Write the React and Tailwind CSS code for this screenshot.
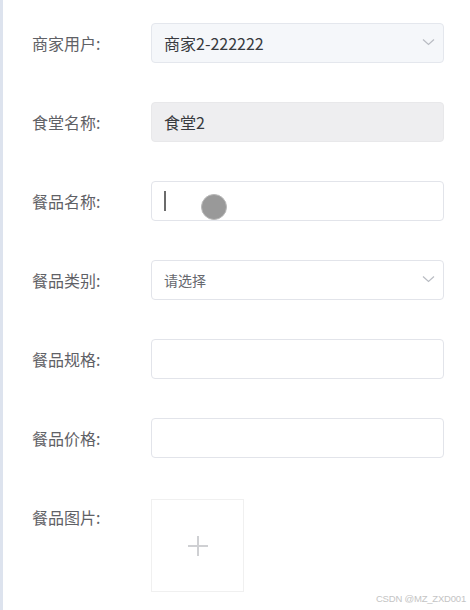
const fontStack = { fontFamily: '"Noto Sans CJK SC", "Noto Sans", sans-serif' }

function Chevron() {
  return (
    <svg width="13" height="8" viewBox="0 0 13 8" className="mb-[2px]">
      <path d="M1 1.5l5.5 5 5.5-5" fill="none" stroke="#b9bcc3" strokeWidth="1.2" />
    </svg>
  )
}

function Label({ children }) {
  return (
    <div className="w-[119px] shrink-0 h-10 leading-10 text-[16px] text-[#5f6166]">
      {children}
    </div>
  )
}

function Field({ label, children }) {
  return (
    <div className="flex items-start">
      <Label>{label}</Label>
      {children}
    </div>
  )
}

export default function App() {
  return (
    <div
      className="relative w-[470px] h-[610px] bg-white border-l-[3px] border-[#dde3ee] overflow-hidden"
      style={fontStack}
    >
      <div className="pl-[29px] pt-[23px] flex flex-col gap-[39px]">
        {/* 商家用户 (disabled select) */}
        <Field label="商家用户:">
          <div className="w-[293px] h-10 rounded bg-[#f5f7fa] border border-[#e4e7ed] flex items-center justify-between pl-3 pr-[8px]">
            <span className="text-[16px] text-[#383a3e]">商家2-222222</span>
            <Chevron />
          </div>
        </Field>

        {/* 食堂名称 (disabled input) */}
        <Field label="食堂名称:">
          <div className="w-[293px] h-10 rounded bg-[#eeeef0] border border-[#e8e8ea] flex items-center pl-3">
            <span className="text-[16px] text-[#383a3e]">食堂2</span>
          </div>
        </Field>

        {/* 餐品名称 (focused input) */}
        <Field label="餐品名称:">
          <div className="relative w-[293px] h-10 rounded bg-white border border-[#e2e4ea] flex items-center pl-3">
            <span className="w-[2px] h-5 bg-[#6b6b6b]" />
            {/* touch indicator */}
            <div className="absolute left-[49px] top-[12px] w-[26px] h-[26px] rounded-full bg-[#999999] border border-[#b8b8b8]" />
          </div>
        </Field>

        {/* 餐品类别 */}
        <Field label="餐品类别:">
          <div className="w-[293px] h-10 rounded bg-white border border-[#e2e4ea] flex items-center justify-between pl-3 pr-[8px]">
            <span className="text-[14px] text-[#66686e]">请选择</span>
            <Chevron />
          </div>
        </Field>

        <Field label="餐品规格:">
          <div className="w-[293px] h-10 rounded bg-white border border-[#e2e4ea]" />
        </Field>

        <Field label="餐品价格:">
          <div className="w-[293px] h-10 rounded bg-white border border-[#e2e4ea]" />
        </Field>

        {/* 餐品图片 upload */}
        <Field label="餐品图片:">
          <div className="mt-[2px] w-[93px] h-[93px] bg-white border border-[#f0f0f0] flex items-center justify-center">
            <svg width="22" height="22" viewBox="0 0 22 22">
              <path d="M11 1v20M1 11h20" stroke="#cfd0d3" strokeWidth="2" />
            </svg>
          </div>
        </Field>
      </div>

      <div
        className="absolute right-[4px] bottom-[4px] text-[9.5px] text-[#c4c4c4] tracking-[-0.2px]"
        style={{ fontFamily: '"Liberation Sans", Arial, sans-serif' }}
      >
        CSDN @MZ_ZXD001
      </div>
    </div>
  )
}
